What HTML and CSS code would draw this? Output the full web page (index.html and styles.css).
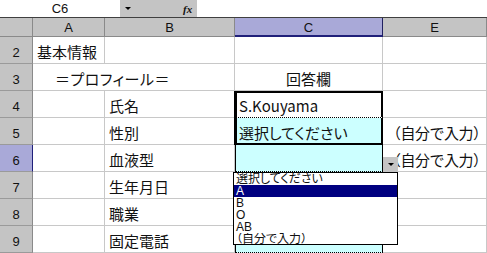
FILE: index.html
```html
<!DOCTYPE html>
<html lang="ja">
  <head>
    <meta charset="UTF-8" />
    <title>プロフィール</title>
    <link rel="stylesheet" href="styles.css">
  </head>
  <body>
    <div id="window">
      <div class="formulaBar">
        <div class="nameBox">C6</div>
        <div class="nameDrop">
          <span class="tri"></span>
          <span class="fx">fx</span>
        </div>
        <div class="formulaInput"></div>
      </div>

      <div class="sheet">
        <div class="hd corner"></div>
        <div class="hd">A</div>
        <div class="hd">B</div>
        <div class="hd active">C</div>
        <div class="hd">E</div>

        <div class="rh">2</div>
        <div class="cell">基本情報</div>
        <div class="cell"></div>
        <div class="cell"></div>
        <div class="cell"></div>

        <div class="rh">3</div>
        <div class="cell wide">＝プロフィール＝</div>
        <div class="cell center">回答欄</div>
        <div class="cell"></div>

        <div class="rh">4</div>
        <div class="cell"></div>
        <div class="cell">氏名</div>
        <div class="cell ans top">S.Kouyama</div>
        <div class="cell"></div>

        <div class="rh">5</div>
        <div class="cell"></div>
        <div class="cell">性別</div>
        <div class="cell ans bottom cyan">選択してください</div>
        <div class="cell note">（自分で入力）</div>

        <div class="rh active">6</div>
        <div class="cell"></div>
        <div class="cell">血液型</div>
        <div class="cell pick cyan"></div>
        <div class="cell note">（自分で入力）</div>

        <div class="rh">7</div>
        <div class="cell"></div>
        <div class="cell">生年月日</div>
        <div class="cell pick cyan"></div>
        <div class="cell"></div>

        <div class="rh">8</div>
        <div class="cell"></div>
        <div class="cell">職業</div>
        <div class="cell pick cyan"></div>
        <div class="cell"></div>

        <div class="rh">9</div>
        <div class="cell"></div>
        <div class="cell">固定電話</div>
        <div class="cell pick cyan"></div>
        <div class="cell"></div>
      </div>

      <!-- validation dropdown on C6 -->
      <div class="dropBtn"><span class="tri"></span></div>
      <ul class="dropList">
        <li>選択してください</li>
        <li class="sel">A</li>
        <li>B</li>
        <li>O</li>
        <li>AB</li>
        <li>（自分で入力）</li>
      </ul>
    </div>
  </body>
</html>
```

FILE: styles.css
```css
body {
  margin: 0;
  padding: 0;
  background: #fff;
  color: #111;
  font-family: "Noto Sans CJK JP", sans-serif;
}
#window {
  position: relative;
  width: 487px;
  height: 253px;
  overflow: hidden;
}
.formulaBar {
  display: flex;
  height: 17px;
  border-bottom: 1px solid #404040;
  font-family: "Liberation Sans", sans-serif;
  font-size: 13px;
}
.nameBox {
  width: 120px;
  text-align: center;
  line-height: 17px;
}
.nameDrop {
  width: 77px;
  background: #c4c4c4;
  display: flex;
  align-items: center;
  padding-left: 5px;
  box-sizing: border-box;
}
.tri {
  width: 0;
  height: 0;
  border-left: 3px solid transparent;
  border-right: 3px solid transparent;
  border-top: 3px solid #000;
}
.fx {
  margin-left: 52px;
  font-family: "Liberation Serif", serif;
  font-style: italic;
  font-weight: bold;
  font-size: 11px;
}
.formulaInput {
  flex: 1;
}
.sheet {
  display: grid;
  grid-template-columns: 33px 72px 130px 148px 104px;
  grid-template-rows: 19px repeat(8, 27px);
}
.hd {
  background: #c4c4c4;
  border-right: 1px solid #8a8a8a;
  border-bottom: 1px solid #8a8a8a;
  box-sizing: border-box;
  text-align: center;
  font-family: "Liberation Sans", sans-serif;
  font-size: 13px;
  line-height: 20px;
}
.hd.active {
  background: #a9a9d8;
  border-right: 1px solid #202060;
  border-bottom: 2px solid #20207a;
}
.rh {
  background: #c4c4c4;
  border-right: 1px solid #8a8a8a;
  border-bottom: 1px solid #9a9a9a;
  box-sizing: border-box;
  text-align: center;
  font-family: "Liberation Sans", sans-serif;
  font-size: 13px;
  line-height: 32px;
}
.rh.active {
  background: #a9a9d8;
  border-right: 1px solid #20207a;
}
.cell {
  border-right: 1px solid #c8c8c8;
  border-bottom: 1px solid #c8c8c8;
  box-sizing: border-box;
  padding: 3px 0 0 4px;
  font-size: 15px;
  line-height: 24px;
  white-space: nowrap;
  font-feature-settings: "palt";
}
.cell.wide {
  grid-column: span 2;
  padding-left: 22px;
  letter-spacing: 0.5px;
}
.cell.center {
  text-align: center;
  padding-left: 0;
}
.cell.cyan {
  background: #ccffff;
}
.cell.ans {
  border-left: 2px solid #000;
  border-right: 2px solid #000;
  box-shadow: -1px 0 0 #000;
  padding-left: 2px;
}
.cell.top {
  border-top: 2px solid #000;
  border-bottom: 1px dotted #000;
  padding-top: 1px;
}
.cell.bottom {
  border-bottom: 2px solid #000;
  padding-top: 3px;
}
.cell.pick {
  border-left: 1px solid #000;
  border-right: 1px solid #000;
  border-bottom: 1px dotted #000;
}
.cell.note {
  padding-left: 3px;
  font-feature-settings: normal;
  letter-spacing: -0.5px;
}
.dropBtn {
  position: absolute;
  left: 383px;
  top: 157px;
  width: 15px;
  height: 15px;
  background: #c4c4c4;
  display: flex;
  align-items: center;
  justify-content: center;
}
.dropList {
  position: absolute;
  left: 233px;
  top: 172px;
  width: 165px;
  height: 73px;
  margin: 0;
  padding: 0;
  list-style: none;
  background: #fff;
  border: 1px solid #000;
  box-sizing: border-box;
  font-family: "Liberation Sans", "Noto Sans CJK JP", sans-serif;
  font-size: 12px;
  line-height: 12px;
  font-feature-settings: "palt";
}
.dropList li {
  height: 12px;
  padding-left: 2px;
  white-space: nowrap;
  overflow: hidden;
}
.dropList li.sel {
  background: #000080;
  color: #fff;
}
```
